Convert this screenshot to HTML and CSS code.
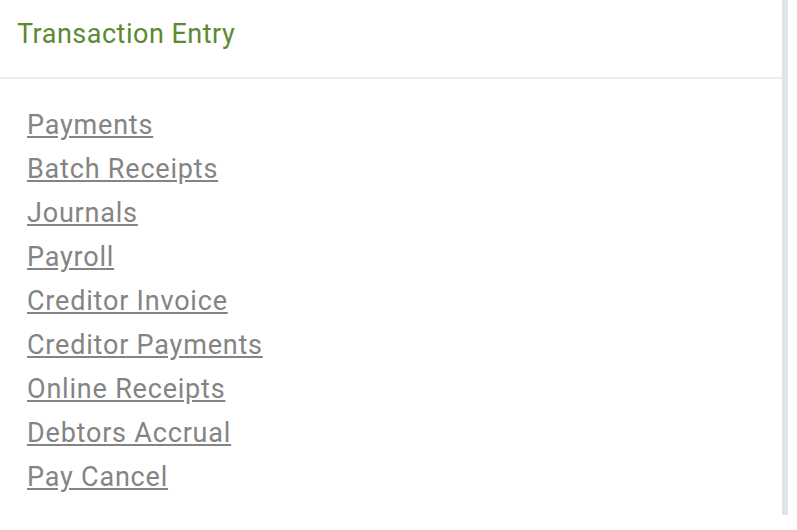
FILE: index.html
```html
<!DOCTYPE html>
<html lang="en">
<head>
    <meta charset="UTF-8">
    <meta name="viewport" content="width=device-width, initial-scale=1.0">
    <title>Transaction Entry</title>
    <link rel="stylesheet" href="styles.css">
</head>
<body>

    <div class="panel">
        <div class="panel-head">Transaction Entry</div>
        <ul class="links">
            <li><a href="#">Payments</a></li>
            <li><a href="#">Batch Receipts</a></li>
            <li><a href="#">Journals</a></li>
            <li><a href="#">Payroll</a></li>
            <li><a href="#">Creditor Invoice</a></li>
            <li><a href="#">Creditor Payments</a></li>
            <li><a href="#">Online Receipts</a></li>
            <li><a href="#">Debtors Accrual</a></li>
            <li><a href="#">Pay Cancel</a></li>
        </ul>
    </div>

</body>
</html>
```
FILE: styles.css
```css
* {
    margin: 0;
    padding: 0;
}

body {
    font-family: Roboto, "Liberation Sans", sans-serif;
    background: #fff;
}

.panel {
    width: 782px;
    height: 515px;
    border-right: 6px solid #dfe4e6;
}

.panel-head {
    height: 77px;
    padding-left: 17px;
    line-height: 68px;
    font-size: 27px;
    letter-spacing: 0.5px;
    color: #5b8a31;
    border-bottom: 2px solid #eeeeee;
}

.links {
    list-style: none;
    padding: 24px 0 0 27px;
}

.links li {
    line-height: 44px;
    font-size: 27px;
    letter-spacing: 0.8px;
}

.links a {
    color: #848484;
    text-decoration: underline;
}
```
